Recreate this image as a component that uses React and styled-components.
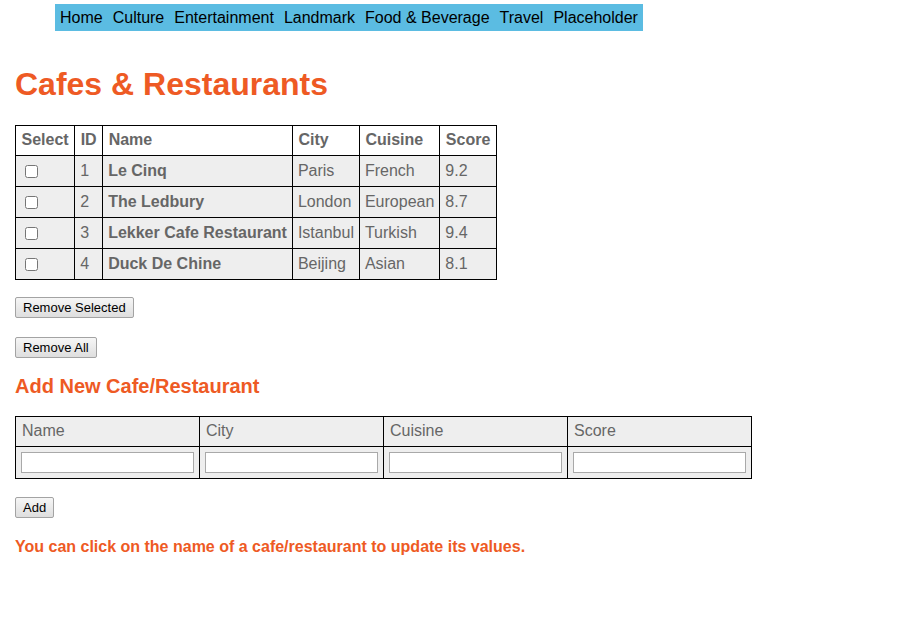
import React from 'react';
import styled, { createGlobalStyle } from 'styled-components';

const GlobalStyle = createGlobalStyle`
    body {
        margin: 0;
        padding: 4px 15px;
        font-family: "Liberation Sans", Arial, sans-serif;
        background: #fff;
    }
`
const Nav = styled.nav`
    display: flex;
    gap: 10px;
    margin-left: 40px;
    width: 578px;
    height: 27px;
    align-items: center;
    padding: 0 5px;
    background-color: #5bbce2;
`
const NavLink = styled.a`
    color: #000;
    font-size: 16px;
    text-decoration: none;
    cursor: pointer;
`
const Titulo = styled.h1`
    margin: 35px 0 22px;
    font-size: 32px;
    line-height: 37px;
    font-weight: bold;
    color: #ee5a24;
`
const Subtitulo = styled.h3`
    margin: 17px 0 18px;
    font-size: 20px;
    line-height: 23px;
    color: #ee5a24;
`
const Aviso = styled.p`
    margin: 20px 0 0;
    font-size: 16px;
    font-weight: bold;
    color: #ee5a24;
`
const Tabela = styled.table`
    border-collapse: collapse;
    color: #666;
    font-size: 16px;
`
const Th = styled.th`
    border: 1px solid #000;
    padding: 5px ${p => (p.$normal ? '6px' : '5.5px')} 6px;
    text-align: left;
    line-height: 18px;
    white-space: nowrap;
    font-weight: ${p => (p.$normal ? 'normal' : 'bold')};
    background: ${p => (p.$cinza ? '#eee' : '#fff')};
`
const Linha = styled.tr`
    background: #eee;
`
const Td = styled.td`
    border: 1px solid #000;
    padding: 6px 5px;
    line-height: 18px;
    white-space: nowrap;
    font-weight: ${p => (p.$bold ? 'bold' : 'normal')};
`
const Check = styled.input`
    margin: 0 0 0 4px;
    width: 13px;
    height: 13px;
    vertical-align: middle;
`
const Campo = styled.input`
    display: block;
    box-sizing: border-box;
    width: 173px;
    height: 21px;
    border: 1px solid #a9a9a9;
    background: #fff;
    padding: 1px 2px;
    font-size: 13px;
`
const TdCampo = styled.td`
    border: 1px solid #000;
    padding: 5px 5px;
    background: #eee;
`
const Botao = styled.button`
    display: block;
    height: 21px;
    padding: 0 7px;
    font-family: "Liberation Sans", Arial, sans-serif;
    font-size: 13px;
    color: #000;
    border: 1px solid #a3a3a3;
    border-radius: 2px;
    background: linear-gradient(#f6f6f6, #dedede);
    cursor: pointer;
    margin-top: ${p => p.$top || '0'};
`

const links = ['Home', 'Culture', 'Entertainment', 'Landmark', 'Food & Beverage', 'Travel', 'Placeholder']

const lugares = [
    { id: 1, name: 'Le Cinq', city: 'Paris', cuisine: 'French', score: '9.2' },
    { id: 2, name: 'The Ledbury', city: 'London', cuisine: 'European', score: '8.7' },
    { id: 3, name: 'Lekker Cafe Restaurant', city: 'Istanbul', cuisine: 'Turkish', score: '9.4' },
    { id: 4, name: 'Duck De Chine', city: 'Beijing', cuisine: 'Asian', score: '8.1' },
]

export default function App() {
    return (
        <>
            <GlobalStyle />
            <Nav>
                {links.map(l => <NavLink key={l}>{l}</NavLink>)}
            </Nav>
            <Titulo>Cafes &amp; Restaurants</Titulo>
            <Tabela>
                <thead>
                    <tr>
                        <Th>Select</Th>
                        <Th>ID</Th>
                        <Th>Name</Th>
                        <Th>City</Th>
                        <Th>Cuisine</Th>
                        <Th>Score</Th>
                    </tr>
                </thead>
                <tbody>
                    {lugares.map(r => (
                        <Linha key={r.id}>
                            <Td><Check type="checkbox" /></Td>
                            <Td>{r.id}</Td>
                            <Td $bold>{r.name}</Td>
                            <Td>{r.city}</Td>
                            <Td>{r.cuisine}</Td>
                            <Td>{r.score}</Td>
                        </Linha>
                    ))}
                </tbody>
            </Tabela>
            <Botao $top="17px">Remove Selected</Botao>
            <Botao $top="19px">Remove All</Botao>
            <Subtitulo>Add New Cafe/Restaurant</Subtitulo>
            <Tabela>
                <thead>
                    <tr>
                        <Th $normal $cinza>Name</Th>
                        <Th $normal $cinza>City</Th>
                        <Th $normal $cinza>Cuisine</Th>
                        <Th $normal $cinza>Score</Th>
                    </tr>
                </thead>
                <tbody>
                    <tr>
                        <TdCampo><Campo /></TdCampo>
                        <TdCampo><Campo /></TdCampo>
                        <TdCampo><Campo /></TdCampo>
                        <TdCampo><Campo /></TdCampo>
                    </tr>
                </tbody>
            </Tabela>
            <Botao $top="18px">Add</Botao>
            <Aviso>You can click on the name of a cafe/restaurant to update its values.</Aviso>
        </>
    )
}
